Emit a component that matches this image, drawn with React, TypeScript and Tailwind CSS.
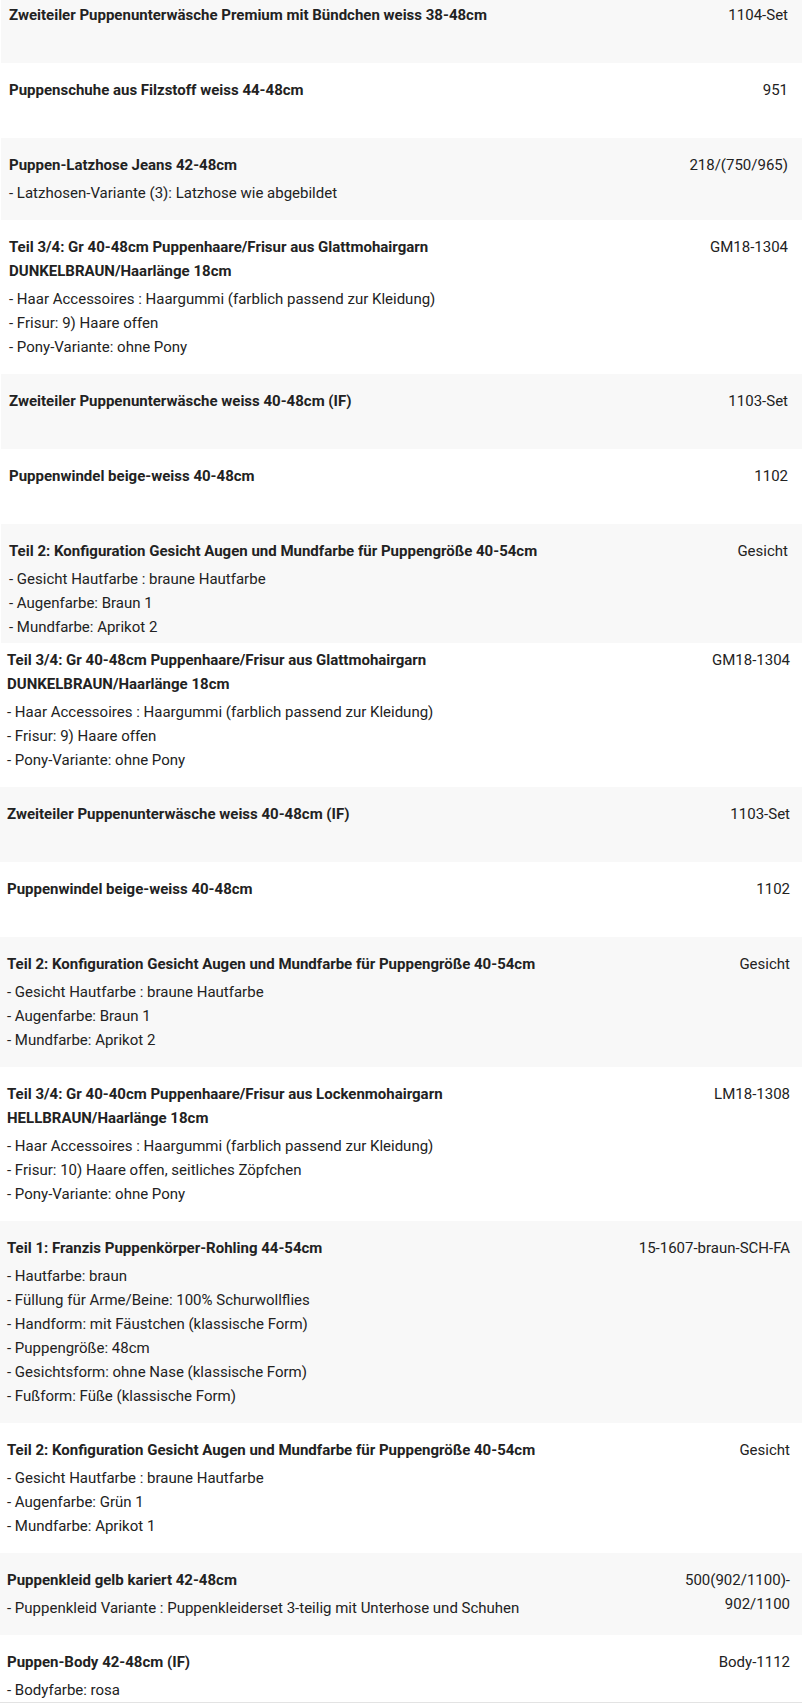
type Item = {
  title: string;
  code: string[];
  details?: string[];
};

const HAAR_GM: Item = {
  title: 'Teil 3/4: Gr 40-48cm Puppenhaare/Frisur aus Glattmohairgarn DUNKELBRAUN/Haarlänge 18cm',
  code: ['GM18-1304'],
  details: [
    '- Haar Accessoires : Haargummi (farblich passend zur Kleidung)',
    '- Frisur: 9) Haare offen',
    '- Pony-Variante: ohne Pony',
  ],
};

const UNTERWAESCHE: Item = { title: 'Zweiteiler Puppenunterwäsche weiss 40-48cm (IF)', code: ['1103-Set'] };
const WINDEL: Item = { title: 'Puppenwindel beige-weiss 40-48cm', code: ['1102'] };

const GESICHT_BRAUN: Item = {
  title: 'Teil 2: Konfiguration Gesicht Augen und Mundfarbe für Puppengröße 40-54cm',
  code: ['Gesicht'],
  details: ['- Gesicht Hautfarbe : braune Hautfarbe', '- Augenfarbe: Braun 1', '- Mundfarbe: Aprikot 2'],
};

const FIRST_ITEMS: Item[] = [
  { title: 'Zweiteiler Puppenunterwäsche Premium mit Bündchen weiss 38-48cm', code: ['1104-Set'] },
  { title: 'Puppenschuhe aus Filzstoff weiss 44-48cm', code: ['951'] },
  {
    title: 'Puppen-Latzhose Jeans 42-48cm',
    code: ['218/(750/965)'],
    details: ['- Latzhosen-Variante (3): Latzhose wie abgebildet'],
  },
  HAAR_GM,
  UNTERWAESCHE,
  WINDEL,
  GESICHT_BRAUN,
];

const SECOND_ITEMS: Item[] = [
  HAAR_GM,
  UNTERWAESCHE,
  WINDEL,
  GESICHT_BRAUN,
  {
    title: 'Teil 3/4: Gr 40-40cm Puppenhaare/Frisur aus Lockenmohairgarn HELLBRAUN/Haarlänge 18cm',
    code: ['LM18-1308'],
    details: [
      '- Haar Accessoires : Haargummi (farblich passend zur Kleidung)',
      '- Frisur: 10) Haare offen, seitliches Zöpfchen',
      '- Pony-Variante: ohne Pony',
    ],
  },
  {
    title: 'Teil 1: Franzis Puppenkörper-Rohling 44-54cm',
    code: ['15-1607-braun-SCH-FA'],
    details: [
      '- Hautfarbe: braun',
      '- Füllung für Arme/Beine: 100% Schurwollflies',
      '- Handform: mit Fäustchen (klassische Form)',
      '- Puppengröße: 48cm',
      '- Gesichtsform: ohne Nase (klassische Form)',
      '- Fußform: Füße (klassische Form)',
    ],
  },
  {
    title: 'Teil 2: Konfiguration Gesicht Augen und Mundfarbe für Puppengröße 40-54cm',
    code: ['Gesicht'],
    details: ['- Gesicht Hautfarbe : braune Hautfarbe', '- Augenfarbe: Grün 1', '- Mundfarbe: Aprikot 1'],
  },
  {
    title: 'Puppenkleid gelb kariert 42-48cm',
    code: ['500(902/1100)-', '902/1100'],
    details: ['- Puppenkleid Variante : Puppenkleiderset 3-teilig mit Unterhose und Schuhen'],
  },
  { title: 'Puppen-Body 42-48cm (IF)', code: ['Body-1112'], details: ['- Bodyfarbe: rosa'] },
];

function ItemRow({ item, shaded, className }: { item: Item; shaded: boolean; className: string }) {
  return (
    <div className={`flex min-h-[75px] ${shaded ? 'bg-[#f8f8f8]' : 'bg-white'} ${className}`}>
      <div className="w-[550px] shrink-0">
        <div className="font-bold leading-6">{item.title}</div>
        {item.details && item.details.length > 0 && (
          <div className="mt-1">
            {item.details.map((d, i) => (
              <div key={i} className="leading-6 whitespace-nowrap">{d}</div>
            ))}
          </div>
        )}
      </div>
      <div className="flex-1 text-right leading-6">
        {item.code.map((c, i) => (
          <div key={i}>{c}</div>
        ))}
      </div>
    </div>
  );
}

export default function App() {
  return (
    <div
      className="min-h-screen bg-white text-[15px] text-[#222]"
      style={{ fontFamily: 'Roboto, "Noto Sans", Arial, sans-serif' }}
    >
      <div className="-mt-3 ml-px">
        {FIRST_ITEMS.map((item, i) => (
          <ItemRow
            key={i}
            item={item}
            shaded={i % 2 === 0}
            className={`pl-2 pr-[14px] pt-[15px] ${i === FIRST_ITEMS.length - 1 ? 'pb-1' : 'pb-[15px]'}`}
          />
        ))}
      </div>
      <div>
        {SECOND_ITEMS.map((item, i) => (
          <ItemRow
            key={i}
            item={item}
            shaded={i % 2 === 1}
            className={`pl-[7px] pr-3 pb-[15px] ${i === 0 ? 'pt-[5px]' : 'pt-[15px]'}`}
          />
        ))}
      </div>
      <div className="fixed inset-x-0 bottom-0 h-[4px] border-t border-[#e3e3e3] bg-white" />
    </div>
  );
}
